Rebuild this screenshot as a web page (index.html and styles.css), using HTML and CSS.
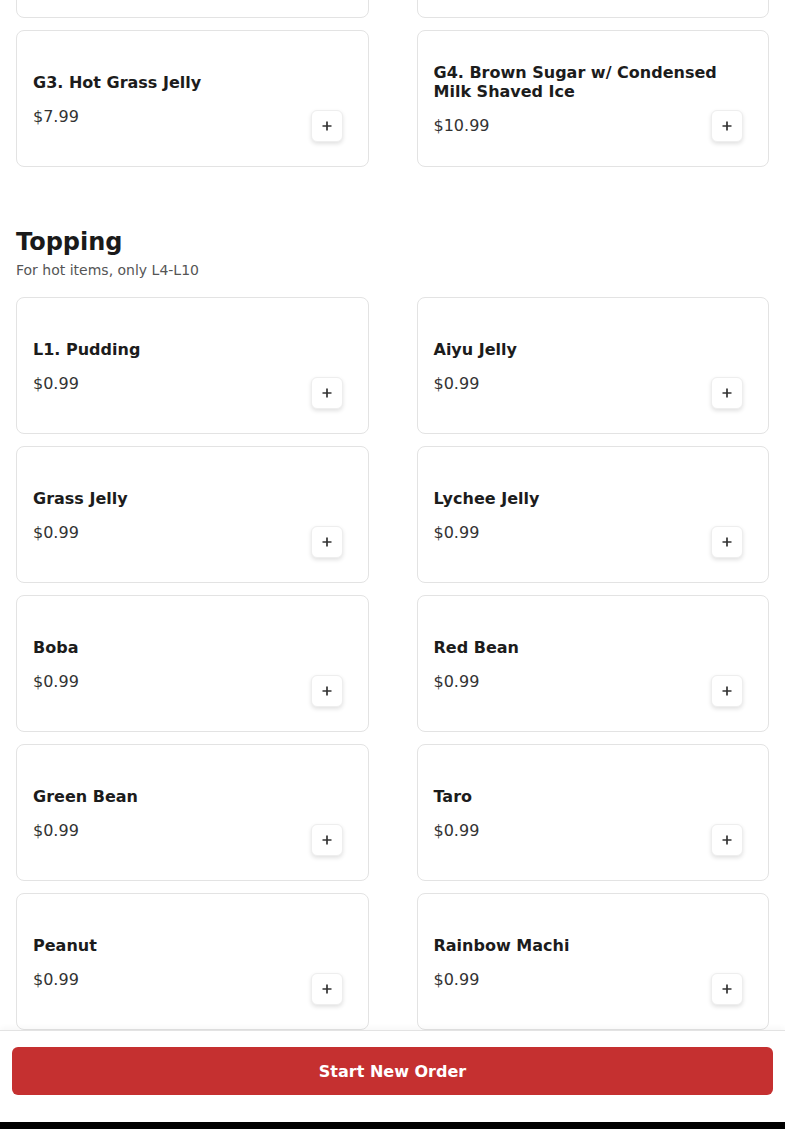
FILE: index.html
```html
<!DOCTYPE html>
<html lang="en">
<head>
<meta charset="utf-8">
<title>Menu</title>
<link rel="stylesheet" href="styles.css">
</head>
<body>
<main class="page">
  <div class="grid grid-first">
    <div class="card card-partial"></div>
    <div class="card card-partial"></div>
    <div class="card"><div class="info"><div class="name">G3. Hot Grass Jelly</div><div class="price">$7.99</div></div><button class="add" aria-label="Add"><svg viewBox="0 0 12 12" width="12" height="12"><path d="M6 1.5v9M1.5 6h9" stroke="#333" stroke-width="1.7" fill="none"/></svg></button></div>
    <div class="card"><div class="info"><div class="name">G4. Brown Sugar w/ Condensed Milk Shaved Ice</div><div class="price">$10.99</div></div><button class="add" aria-label="Add"><svg viewBox="0 0 12 12" width="12" height="12"><path d="M6 1.5v9M1.5 6h9" stroke="#333" stroke-width="1.7" fill="none"/></svg></button></div>
  </div>

  <section class="section">
    <h2 class="section-title">Topping</h2>
    <p class="section-note">For hot items, only L4-L10</p>
    <div class="grid">
      <div class="card"><div class="info"><div class="name">L1. Pudding</div><div class="price">$0.99</div></div><button class="add" aria-label="Add"><svg viewBox="0 0 12 12" width="12" height="12"><path d="M6 1.5v9M1.5 6h9" stroke="#333" stroke-width="1.7" fill="none"/></svg></button></div>
      <div class="card"><div class="info"><div class="name">Aiyu Jelly</div><div class="price">$0.99</div></div><button class="add" aria-label="Add"><svg viewBox="0 0 12 12" width="12" height="12"><path d="M6 1.5v9M1.5 6h9" stroke="#333" stroke-width="1.7" fill="none"/></svg></button></div>
      <div class="card"><div class="info"><div class="name">Grass Jelly</div><div class="price">$0.99</div></div><button class="add" aria-label="Add"><svg viewBox="0 0 12 12" width="12" height="12"><path d="M6 1.5v9M1.5 6h9" stroke="#333" stroke-width="1.7" fill="none"/></svg></button></div>
      <div class="card"><div class="info"><div class="name">Lychee Jelly</div><div class="price">$0.99</div></div><button class="add" aria-label="Add"><svg viewBox="0 0 12 12" width="12" height="12"><path d="M6 1.5v9M1.5 6h9" stroke="#333" stroke-width="1.7" fill="none"/></svg></button></div>
      <div class="card"><div class="info"><div class="name">Boba</div><div class="price">$0.99</div></div><button class="add" aria-label="Add"><svg viewBox="0 0 12 12" width="12" height="12"><path d="M6 1.5v9M1.5 6h9" stroke="#333" stroke-width="1.7" fill="none"/></svg></button></div>
      <div class="card"><div class="info"><div class="name">Red Bean</div><div class="price">$0.99</div></div><button class="add" aria-label="Add"><svg viewBox="0 0 12 12" width="12" height="12"><path d="M6 1.5v9M1.5 6h9" stroke="#333" stroke-width="1.7" fill="none"/></svg></button></div>
      <div class="card"><div class="info"><div class="name">Green Bean</div><div class="price">$0.99</div></div><button class="add" aria-label="Add"><svg viewBox="0 0 12 12" width="12" height="12"><path d="M6 1.5v9M1.5 6h9" stroke="#333" stroke-width="1.7" fill="none"/></svg></button></div>
      <div class="card"><div class="info"><div class="name">Taro</div><div class="price">$0.99</div></div><button class="add" aria-label="Add"><svg viewBox="0 0 12 12" width="12" height="12"><path d="M6 1.5v9M1.5 6h9" stroke="#333" stroke-width="1.7" fill="none"/></svg></button></div>
      <div class="card"><div class="info"><div class="name">Peanut</div><div class="price">$0.99</div></div><button class="add" aria-label="Add"><svg viewBox="0 0 12 12" width="12" height="12"><path d="M6 1.5v9M1.5 6h9" stroke="#333" stroke-width="1.7" fill="none"/></svg></button></div>
      <div class="card"><div class="info"><div class="name">Rainbow Machi</div><div class="price">$0.99</div></div><button class="add" aria-label="Add"><svg viewBox="0 0 12 12" width="12" height="12"><path d="M6 1.5v9M1.5 6h9" stroke="#333" stroke-width="1.7" fill="none"/></svg></button></div>
      <div class="card card-partial"></div>
      <div class="card card-partial"></div>
    </div>
  </section>
</main>

<footer class="footer">
  <div class="footer-bar">
    <button class="order-btn">Start New Order</button>
  </div>
  <div class="footer-edge"></div>
</footer>
</body>
</html>
```

FILE: styles.css
```css
* { box-sizing: border-box; }

html, body {
  margin: 0;
  padding: 0;
  background: #ffffff;
  overflow: hidden;
}

body {
  font-family: "DejaVu Sans", "Liberation Sans", sans-serif;
  color: #1a1a1a;
  height: 1129px;
}

.page {
  padding: 0 16px;
}

.grid {
  display: grid;
  grid-template-columns: 1fr 1fr;
  column-gap: 48px;
  row-gap: 12px;
}

.grid-first {
  margin-top: -119px;
}

.card {
  display: grid;
  grid-template-areas: "stack";
  height: 137px;
  padding: 16px;
  border: 1px solid #e3e3e3;
  border-radius: 8px;
  background: #fff;
}

.info {
  grid-area: stack;
  align-self: center;
  padding-top: 2px;
  min-width: 0;
}

.name {
  font-size: 16px;
  font-weight: bold;
  line-height: 19px;
  color: #1c1c1c;
}

.price {
  margin-top: 15px;
  font-size: 16px;
  line-height: 20px;
  color: #333;
}

.add {
  grid-area: stack;
  align-self: end;
  justify-self: end;
  width: 32px;
  height: 32px;
  margin: 0 9px 8px 0;
  padding: 0;
  display: flex;
  align-items: center;
  justify-content: center;
  background: #fff;
  border: 1px solid #eeeeee;
  border-radius: 6px;
  box-shadow: 0 2px 4px rgba(0, 0, 0, 0.12);
}

.section {
  margin-top: 59px;
}

.section-title {
  margin: 0;
  font-size: 24px;
  line-height: 32px;
  font-weight: bold;
  color: #1a1a1a;
}

.section-note {
  margin: 2px 0 17px;
  font-size: 14px;
  line-height: 20px;
  color: #555;
}

.footer {
  position: fixed;
  left: 0;
  right: 0;
  bottom: 0;
}

.footer-bar {
  background: #fff;
  border-top: 1px solid #e3e3e3;
  box-shadow: 0 -2px 6px rgba(0, 0, 0, 0.04);
  padding: 16px 12px 27px;
}

.order-btn {
  display: block;
  width: 100%;
  height: 48px;
  border: none;
  border-radius: 6px;
  background: #c53030;
  color: #fff;
  font-family: "DejaVu Sans", "Liberation Sans", sans-serif;
  font-size: 16px;
  font-weight: bold;
}

.footer-edge {
  height: 7px;
  background: #000;
}
```
